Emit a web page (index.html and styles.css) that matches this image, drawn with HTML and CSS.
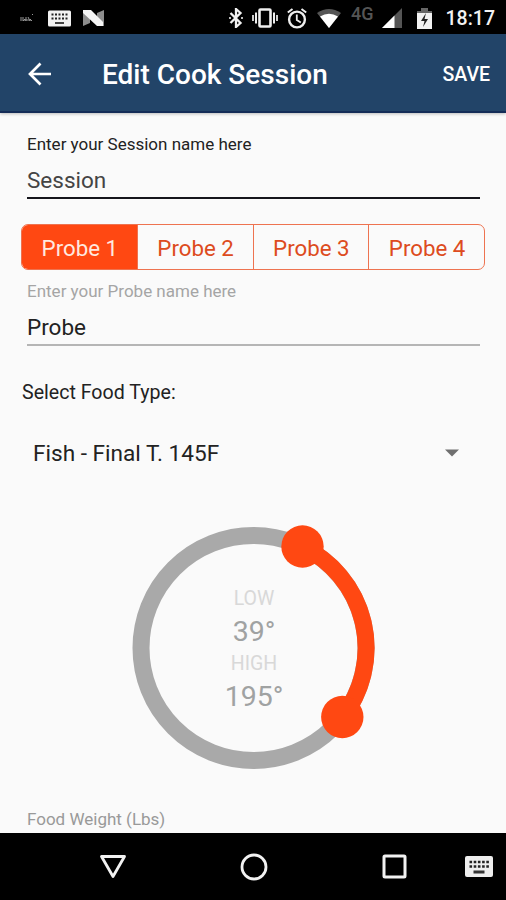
FILE: index.html
```html
<!DOCTYPE html>
<html lang="en">
<head>
    <meta charset="UTF-8">
    <meta name="viewport" content="width=device-width, initial-scale=1.0">
    <title>Edit Cook Session</title>
    <link rel="stylesheet" href="styles.css">
</head>
<body>
    <div class="status-bar">
        <svg class="mark" width="14" height="8" viewBox="0 0 14 8"><path d="M1 3v4M3 3v4l2-2v2M6 3v4M8 3l2 4M10 5l2 2M5 6h6M12 .5h1" fill="none" stroke="#999" stroke-width="1"/></svg>
        <svg class="keyboard" width="23" height="17" viewBox="0 0 23 17">
            <rect x="0" y="0.5" width="23" height="16" rx="1.5" fill="#f2f2f2"/>
            <path d="M3.5 4.5h16M3.5 8.500h16" stroke="#222" stroke-width="2" stroke-dasharray="2 1.5"/>
            <path d="M7 13h9" stroke="#444" stroke-width="2"/>
        </svg>
        <svg class="android-n" width="21" height="17" viewBox="0 0 21 17">
            <path d="M0 0h7v13l-7 3z" fill="#8d8d8d"/>
            <path d="M14 3l7-3v16h-7z" fill="#8d8d8d"/>
            <path d="M0 0h8L20 12v4h-6L0 3z" fill="#f5f5f5"/>
        </svg>
        <svg class="bluetooth" width="14" height="20" viewBox="0 0 14 20"><path d="M1.500 5l10 10L7 19V1l4.500 4-10 10" fill="none" stroke="#f2f2f2" stroke-width="2.300"/><path d="M0 10h2M12 10h2" stroke="#bbb" stroke-width="2"/></svg>
        <svg class="vibrate" width="26" height="20" viewBox="0 0 26 20">
            <rect x="7.500" y="1.500" width="11" height="17" rx="1" fill="none" stroke="#eee" stroke-width="2.600"/>
            <path d="M4 4.500v11M22 4.500v11" stroke="#eee" stroke-width="2"/>
            <path d="M1 7v6M25 7v6" stroke="#ccc" stroke-width="2"/>
        </svg>
        <svg class="alarm" width="20" height="21" viewBox="0 0 20 21">
            <circle cx="10" cy="11.500" r="7.900" fill="none" stroke="#eee" stroke-width="2.400"/>
            <path d="M.8 4.500L5.500 1M19.200 4.500L14.500 1" stroke="#eee" stroke-width="2"/>
            <path d="M9.800 6.500v5.500l4 2.500" fill="none" stroke="#eee" stroke-width="1.800"/>
        </svg>
        <svg class="wifi" width="24" height="19" viewBox="0 0 24 19"><path d="M0 4Q12-4 24 4L12 19z" fill="#555"/><path d="M3 7.500Q12 2 21 7.500L12 19z" fill="#fff"/></svg>
        <span class="network">4G</span>
        <svg class="signal" width="20" height="20" viewBox="0 0 20 20"><path d="M20 0v20H0z" fill="#555"/><path d="M12.500 7.500V20H0z" fill="#fff"/></svg>
        <svg class="battery" width="15" height="21" viewBox="0 0 15 21"><path d="M4 0h7v3h4v5H0V3h4z" fill="#666"/><path d="M0 5h15v16H0z" fill="#f2f2f2"/><path d="M9 5l-5 8h3.500L6 19l5-8H7.500z" fill="#222"/></svg>
        <span class="time">18:17</span>
    </div>

    <div class="app-bar">
        <svg class="back" width="24" height="24" viewBox="0 0 24 24"><path d="M23 12H2M12.500 1.500L2 12l10.500 10.500" fill="none" stroke="#fff" stroke-width="2.700"/></svg>
        <h1>Edit Cook Session</h1>
        <span class="save">SAVE</span>
    </div>

    <div class="content">
        <div class="field active">
            <label>Enter your Session name here</label>
            <div class="value">Session</div>
        </div>

        <div class="probes">
            <div class="probe selected">Probe 1</div>
            <div class="probe">Probe 2</div>
            <div class="probe">Probe 3</div>
            <div class="probe">Probe 4</div>
        </div>

        <div class="field probe-field">
            <label>Enter your Probe name here</label>
            <div class="value">Probe</div>
        </div>

        <div class="food-label">Select Food Type:</div>
        <div class="food-select">
            <span>Fish - Final T. 145F</span>
            <svg width="14" height="8" viewBox="0 0 14 8"><path d="M0 .5h14l-7 7z" fill="#6f6f6f"/></svg>
        </div>

        <div class="dial">
            <svg width="244" height="246" viewBox="0 0 244 246">
                <circle cx="121.500" cy="123" r="112.500" fill="none" stroke="#a9a9a9" stroke-width="17"/>
                <path d="M170.500 21.700A112.500 112.500 0 0 1 210.500 192" fill="none" stroke="#ff4812" stroke-width="17"/>
                <circle cx="170.500" cy="21.500" r="21.200" fill="#ff4812"/>
                <circle cx="210.300" cy="192" r="21.200" fill="#ff4812"/>
            </svg>
            <div class="readout">
                <div class="name">LOW</div>
                <div class="temp">39°</div>
                <div class="name">HIGH</div>
                <div class="temp">195°</div>
            </div>
        </div>

        <div class="weight-label">Food Weight (Lbs)</div>
    </div>

    <div class="nav-bar">
        <svg class="nav-back" width="28" height="26" viewBox="0 0 28 26"><path d="M2.500 2.500h23L14 22.500z" fill="none" stroke="#f2f2f2" stroke-width="2.800" stroke-linejoin="round"/></svg>
        <svg class="nav-home" width="28" height="28" viewBox="0 0 28 28"><circle cx="14" cy="14" r="12" fill="none" stroke="#f2f2f2" stroke-width="2.800"/></svg>
        <svg class="nav-recent" width="25" height="25" viewBox="0 0 25 25"><rect x="2" y="2" width="21" height="21" rx="1" fill="none" stroke="#f2f2f2" stroke-width="3"/></svg>
        <svg class="nav-keyboard" width="28" height="21" viewBox="0 0 28 21">
            <rect width="28" height="21" rx="2" fill="#eee"/>
            <path d="M4.500 6h20M4.500 10.500h20" stroke="#222" stroke-width="2.600" stroke-dasharray="2.600 1.600"/>
            <path d="M8.500 16h11" stroke="#333" stroke-width="3"/>
        </svg>
    </div>
</body>
</html>
```
FILE: styles.css
```css
* {
    box-sizing: border-box;
}
body {
    margin: 0;
    height: 900px;
    display: flex;
    flex-direction: column;
    overflow: hidden;
    font-family: Roboto, "Noto Sans", sans-serif;
    background: #fafafa;
    color: #222;
}
svg {
    display: block;
    flex: none;
}

/* status bar */
.status-bar {
    height: 34px;
    flex: none;
    display: flex;
    align-items: center;
    padding: 2px 11px 0 20px;
    background: #000;
    color: #f2f2f2;
}
.keyboard {
    margin-left: 14px;
}
.android-n {
    margin-left: 12px;
}
.bluetooth {
    margin-left: 125px;
}
.vibrate {
    margin-left: 9px;
}
.alarm {
    margin-left: 9px;
}
.wifi {
    margin-left: 10px;
}
.network {
    width: 26px;
    margin-left: 10px;
    margin-bottom: 8px;
    font-size: 18px;
    line-height: 20px;
    font-weight: 500;
    color: #555;
}
.signal {
    margin-left: 5px;
}
.battery {
    margin-left: 15px;
}
.time {
    margin-left: auto;
    font-size: 19.5px;
    font-weight: 500;
}

/* title bar */
.app-bar {
    height: 79px;
    flex: none;
    display: flex;
    align-items: center;
    padding: 2px 16px 0 28px;
    background: #224468;
    border-bottom: 2px solid #142c57;
    color: #fff;
    box-shadow: 0 1px 3px rgba(0, 0, 0, 0.25);
}
.app-bar h1 {
    margin: 2px 0 0 50px;
    font-size: 28px;
    line-height: 32px;
    font-weight: 500;
}
.save {
    margin: 2px 0 0 auto;
    font-size: 19.5px;
    font-weight: 500;
}

/* form */
.content {
    flex: 1;
    padding: 20px 21px 0;
}
.field {
    margin: 0 5px 0 6px;
    border-bottom: 2px solid #b5b5b5;
}
.field label {
    display: block;
    font-size: 17px;
    line-height: 22px;
    color: #a5a5a5;
}
.field .value {
    margin-top: 10px;
    padding-bottom: 2px;
    font-size: 22.5px;
    line-height: 30px;
}
.active {
    border-color: #15151c;
}
.active label {
    color: #222;
}
.active .value {
    color: #444;
}
.probes {
    display: flex;
    height: 46px;
    margin-top: 25px;
    border: 1px solid #ee7350;
    border-radius: 7px;
    overflow: hidden;
}
.probe {
    flex: 1;
    padding-left: 1px;
    border-left: 1px solid #ee7350;
    text-align: center;
    font-size: 22.3px;
    line-height: 46px;
    color: #dd4b20;
}
.probe:first-child {
    border-left: none;
}
.selected {
    background: #ff4812;
    color: #ffe9e0;
}
.probe-field {
    margin-top: 10px;
}
.food-label {
    margin: 35px 0 0 1px;
    font-size: 19.6px;
    line-height: 24px;
}
.food-select {
    display: flex;
    justify-content: space-between;
    align-items: center;
    margin-top: 33px;
    padding: 0 26px 0 12px;
    font-size: 22.6px;
    line-height: 30px;
}
.food-select span {
    padding-top: 1px;
    margin-bottom: -1px;
}

/* temperature range dial */
.dial {
    display: grid;
    width: 244px;
    margin: 57px 0 0 111px;
}
.dial svg,
.readout {
    grid-area: 1 / 1;
}
.readout {
    padding-top: 57px;
    text-align: center;
}
.name {
    font-size: 19.5px;
    line-height: 34px;
    color: #d8d8d8;
}
.temp {
    font-size: 28.5px;
    line-height: 31px;
    color: #a0a2a2;
}
.weight-label {
    margin: 37px 0 0 6px;
    font-size: 17px;
    line-height: 22px;
    color: #999;
}

/* navigation keys */
.nav-bar {
    height: 67px;
    flex: none;
    display: flex;
    align-items: center;
    padding-left: 99px;
    background: #000;
}
.nav-home {
    margin-left: 113px;
}
.nav-recent {
    margin-left: 114px;
}
.nav-keyboard {
    margin-left: 58px;
}
```
